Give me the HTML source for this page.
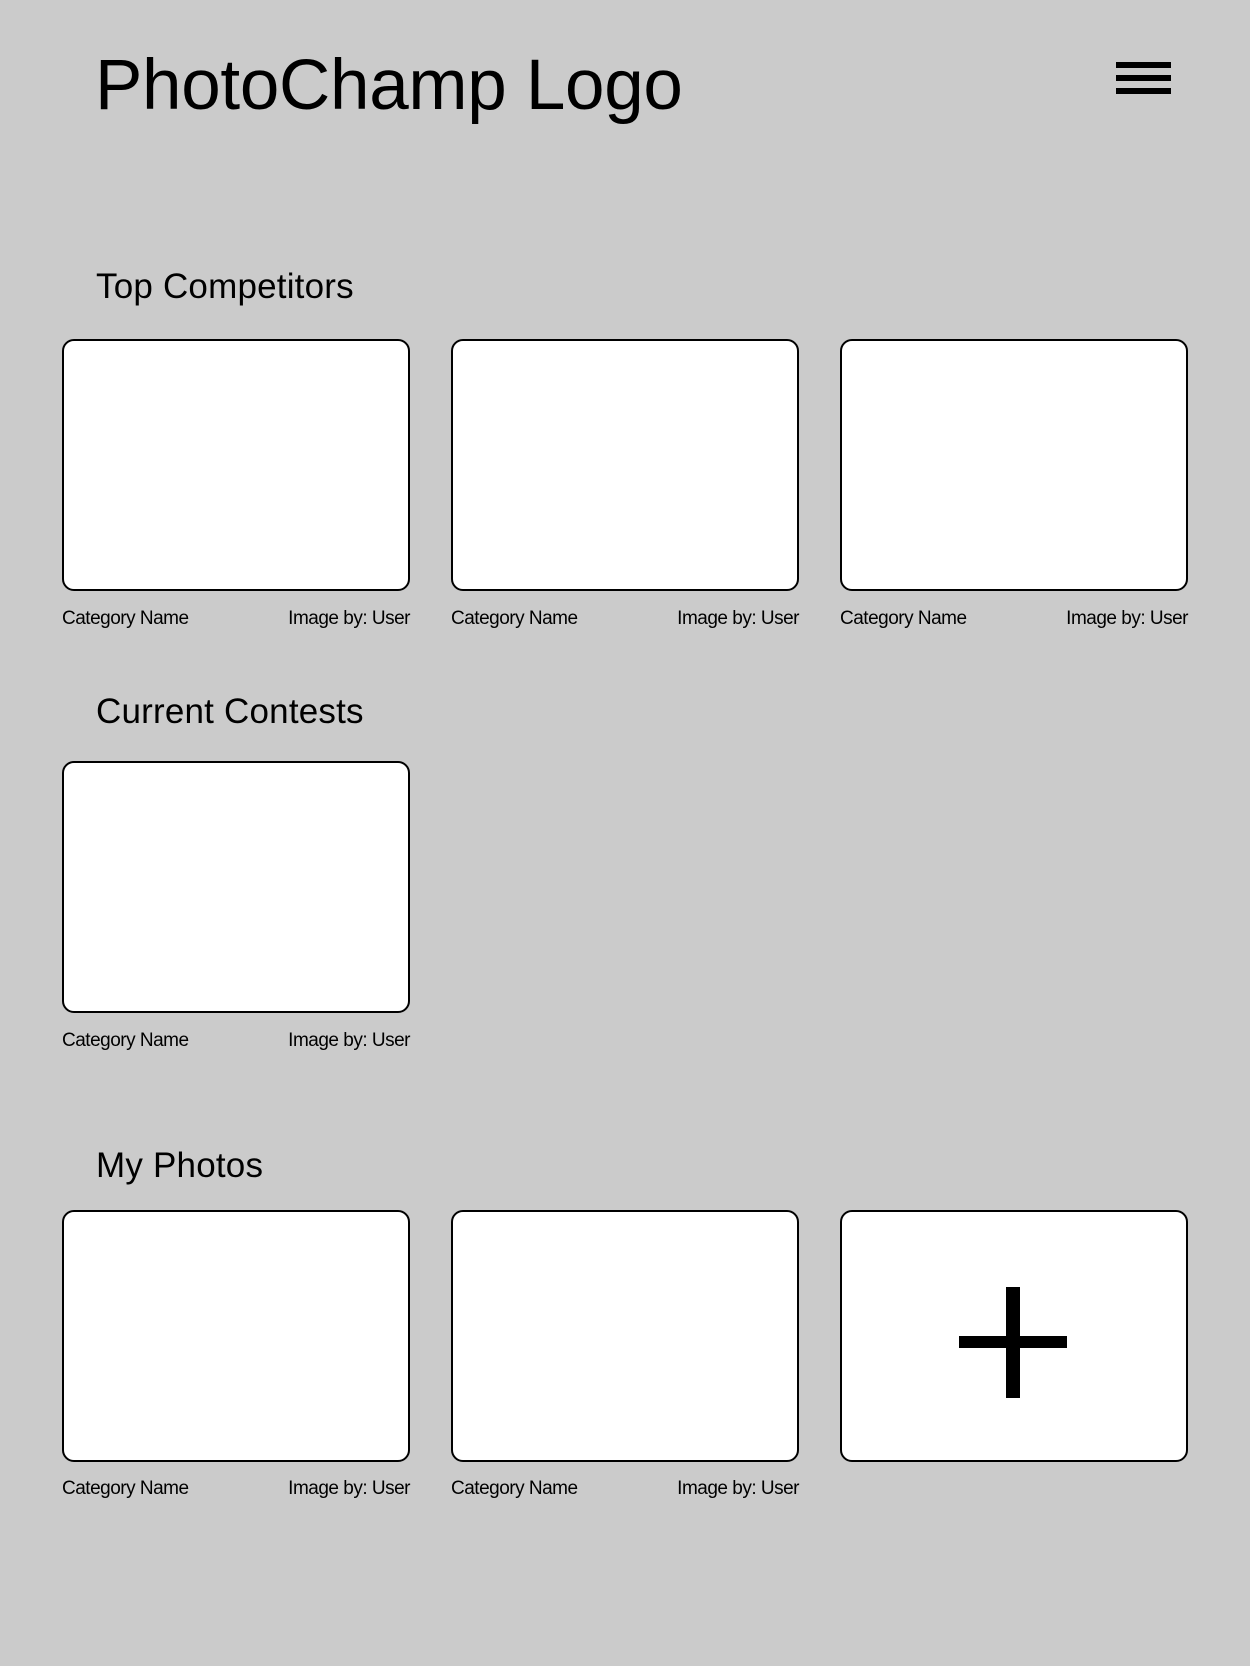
<!DOCTYPE html>
<html><head><meta charset="utf-8"><style>
body{margin:0;width:1250px;height:1666px;background:#cbcbcb;position:relative;overflow:hidden;font-family:"Liberation Sans",sans-serif;color:#000}
.a{position:absolute;line-height:1;white-space:nowrap}
.logo{left:95px;top:50px;font-size:71px;letter-spacing:-0.3px}
.h{left:96px;font-size:35px;letter-spacing:0.2px}
.card{position:absolute;width:344px;height:248px;background:#fff;border:2px solid #000;border-radius:12px}
.cap{position:absolute;width:348px;font-size:19px;line-height:1;display:flex;justify-content:space-between;letter-spacing:-0.5px}
.bar{position:absolute;left:1116px;width:55px;height:6px;background:#000}
</style></head><body>
<div class="a logo">PhotoChamp Logo</div>
<div class="bar" style="top:62px"></div>
<div class="bar" style="top:75px"></div>
<div class="bar" style="top:88px"></div>

<div class="a h" style="top:269px">Top Competitors</div>
<div class="card" style="left:62px;top:339px"></div>
<div class="card" style="left:451px;top:339px"></div>
<div class="card" style="left:840px;top:339px"></div>
<div class="cap" style="left:62px;top:609px"><span>Category Name</span><span>Image by: User</span></div>
<div class="cap" style="left:451px;top:609px"><span>Category Name</span><span>Image by: User</span></div>
<div class="cap" style="left:840px;top:609px"><span>Category Name</span><span>Image by: User</span></div>

<div class="a h" style="top:694px">Current Contests</div>
<div class="card" style="left:62px;top:761px"></div>
<div class="cap" style="left:62px;top:1031px"><span>Category Name</span><span>Image by: User</span></div>

<div class="a h" style="top:1148px">My Photos</div>
<div class="card" style="left:62px;top:1210px"></div>
<div class="card" style="left:451px;top:1210px"></div>
<div class="card" style="left:840px;top:1210px"></div>
<div style="position:absolute;left:959px;top:1336px;width:108px;height:12px;background:#000"></div>
<div style="position:absolute;left:1006px;top:1287px;width:14px;height:111px;background:#000"></div>
<div class="cap" style="left:62px;top:1479px"><span>Category Name</span><span>Image by: User</span></div>
<div class="cap" style="left:451px;top:1479px"><span>Category Name</span><span>Image by: User</span></div>
</body></html>
